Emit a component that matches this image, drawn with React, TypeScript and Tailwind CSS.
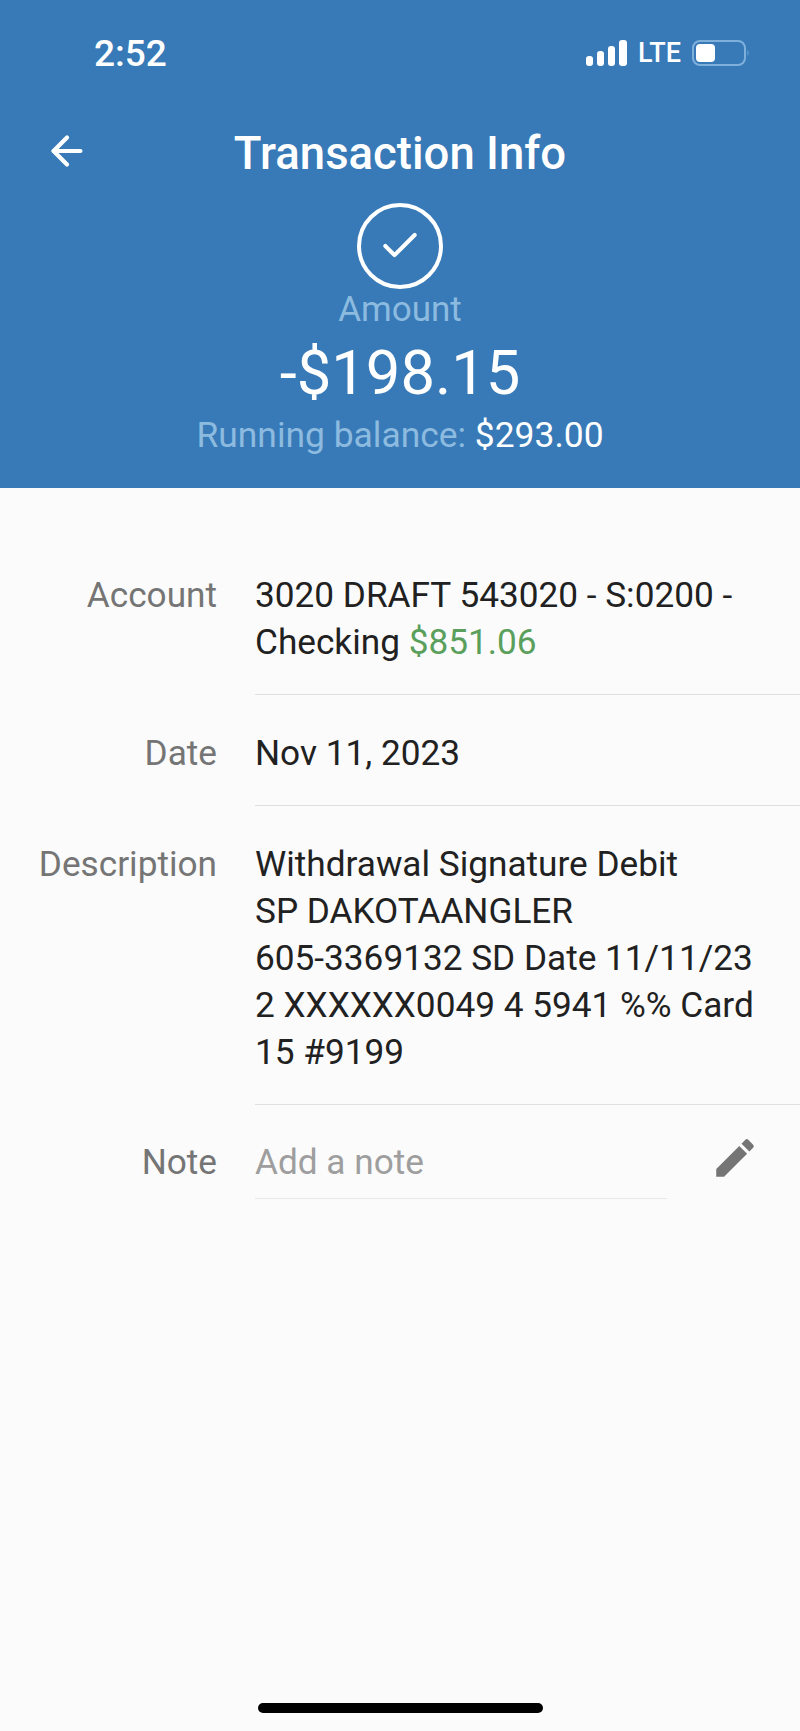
import { ArrowLeft, Check } from 'lucide-react';

function StatusBar() {
  return (
    <div className="flex h-[106px] items-center justify-between pl-[94px] pr-[50px]">
      <span className="text-[37px] font-medium leading-none text-white">2:52</span>
      <div className="flex items-center">
        <svg width="41" height="26" viewBox="0 0 41 26" className="fill-white">
          <rect x="0" y="16" width="7" height="10" rx="3" />
          <rect x="11" y="11" width="7" height="15" rx="3" />
          <rect x="22" y="6" width="7" height="20" rx="3" />
          <rect x="33" y="0" width="8" height="26" rx="3" />
        </svg>
        <span className="ml-[11px] text-[27px] font-medium leading-none text-white">LTE</span>
        <svg width="58" height="26" viewBox="0 0 58 26" className="ml-[11px]">
          <rect x="1" y="1" width="52" height="24" rx="7" fill="none" stroke="#7fb0dc" strokeWidth="2" />
          <rect x="4" y="4" width="19" height="18" rx="4" fill="#fff" />
          <path d="M55.5 10 Q57.5 13 55.5 16 Z" fill="#7fb0dc" />
        </svg>
      </div>
    </div>
  );
}

function Header() {
  return (
    <div className="flex h-[488px] flex-col items-center bg-[#377ab7]">
      <div className="w-full">
        <StatusBar />
      </div>
      <div className="relative mt-[23px] flex w-full justify-center">
        <ArrowLeft size={46} strokeWidth={2.2} className="absolute left-[44px] top-[-1px] text-white" />
        <h1 className="text-[45.5px] font-medium leading-[50px] text-white">Transaction Info</h1>
      </div>
      <div className="mt-[24px] flex h-[86px] w-[86px] items-center justify-center rounded-full border-[4px] border-white">
        <Check size={44} strokeWidth={2.2} className="text-white" />
      </div>
      <div className="mt-[1px] text-[35px] leading-[40px] text-[#8dbbe0]">Amount</div>
      <div className="mt-[8px] text-[61.5px] leading-[70px] text-white">-$198.15</div>
      <div className="mt-[7px] text-[35.4px] leading-[40px] text-[#8dbbe0]">
        Running balance: <span className="text-white">$293.00</span>
      </div>
    </div>
  );
}

function Row({ label, children }: { label: string; children: React.ReactNode }) {
  return (
    <div className="flex">
      <div className="w-[217px] shrink-0 pt-[35px] text-right leading-[47px] text-[#757575]">{label}</div>
      <div className="ml-[38px] flex-1 border-b border-[#e0e0e0] pb-[28px] pt-[35px] leading-[47px] text-[#212121]">
        {children}
      </div>
    </div>
  );
}

export default function App() {
  return (
    <div className="flex h-[1731px] w-[800px] flex-col bg-[#fbfbfb] font-['Roboto',sans-serif] text-[35.2px]">
      <Header />
      <div className="pt-[49px]">
        <Row label="Account">
          3020 DRAFT 543020 - S:0200 -<br />
          Checking <span className="text-[#5a9f5b]">$851.06</span>
        </Row>
        <Row label="Date">Nov 11, 2023</Row>
        <Row label="Description">
          Withdrawal Signature Debit
          <br />
          SP DAKOTAANGLER
          <br />
          605-3369132 SD Date 11/11/23
          <br />2 XXXXXX0049 4 5941 %% Card
          <br />
          15 #9199
        </Row>
        <div className="flex">
          <div className="w-[217px] shrink-0 pt-[34px] text-right leading-[47px] text-[#757575]">Note</div>
          <div className="ml-[38px] w-[412px] border-b border-[#e8e8e8] pb-[12px] pt-[34px] leading-[47px] text-[#9e9e9e]">
            Add a note
          </div>
          <svg width="50" height="50" viewBox="0 0 24 24" className="ml-[43px] mt-[28px] fill-[#757575]">
            <path d="M3 17.25V21h3.75L17.81 9.94l-3.75-3.75L3 17.25zM20.71 7.04a1 1 0 0 0 0-1.41l-2.34-2.34a1 1 0 0 0-1.41 0l-1.83 1.83 3.75 3.75 1.83-1.83z" />
          </svg>
        </div>
      </div>
      <div className="mt-auto mb-[18px] h-[10px] w-[285px] self-center rounded-full bg-black" />
    </div>
  );
}
